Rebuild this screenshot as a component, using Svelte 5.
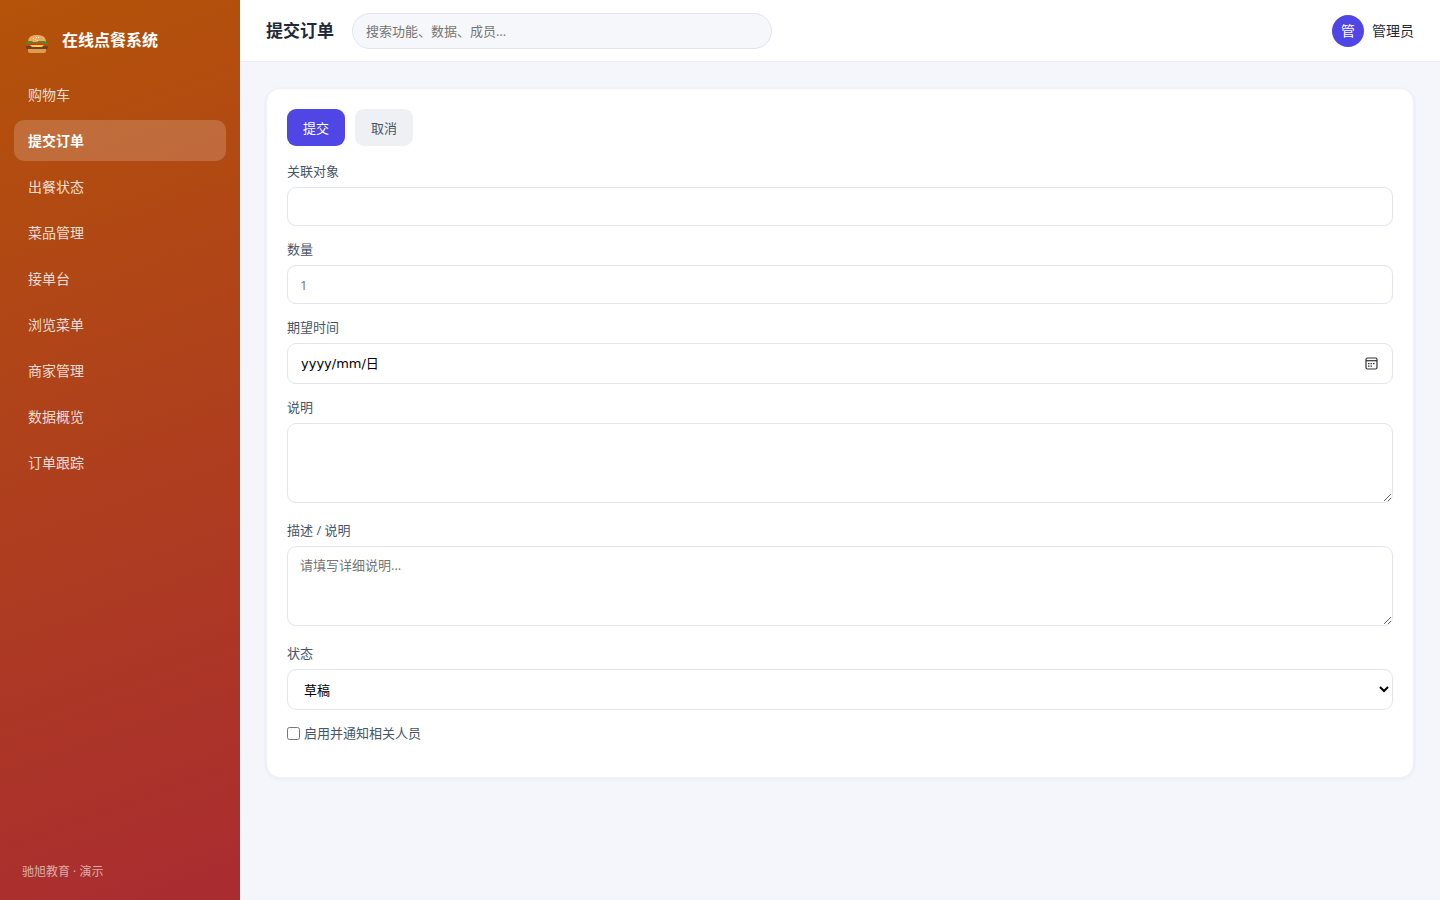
<script>
  const navItems = ['购物车', '提交订单', '出餐状态', '菜品管理', '接单台', '浏览菜单', '商家管理', '数据概览', '订单跟踪'];
  let active = $state('提交订单');
  let date = $state('');
</script>

<div class="layout">
  <aside class="sidebar">
    <div class="brand">
      <svg class="logo" viewBox="0 0 22 18" aria-hidden="true">
        <path d="M2 7C2 2.500 5 0 11 0s9 2.500 9 7z" fill="#f0a95e" />
        <path d="M7 3h1v1H7zM10 2h1v1h-1zM9 4h1v1H9zM12 2h1v1h-1zM11 5h1v1h-1z" fill="#fff3dc" />
        <path d="M2 14h18v2q0 2-2 2H4q-2 0-2-2z" fill="#e39a4c" />
        <path d="M3 8h16v2H3z" fill="#f02a25" />
        <rect x="0" y="11" width="22" height="3" rx="1" fill="#6d4030" />
        <path d="M4 10h14l-2 2H6z" fill="#ffd43b" />
        <path d="M2 6h4l1 1h4l1-1h7l1 1h1l1 1v1h-4l-1-1H5L4 9H0V8z" fill="#42961f" />
      </svg>
      <span>在线点餐系统</span>
    </div>
    <nav>
      {#each navItems as item}
        <a href="#top" class:active={item === active} onclick={(e) => { e.preventDefault(); active = item; }}>{item}</a>
      {/each}
    </nav>
    <footer>驰旭教育 · 演示</footer>
  </aside>

  <div class="main">
    <header>
      <h1>提交订单</h1>
      <input class="search" type="search" aria-label="搜索" placeholder="搜索功能、数据、成员…" />
      <div class="user">
        <span class="avatar">管</span>
        <span>管理员</span>
      </div>
    </header>

    <main>
      <form class="card" onsubmit={(e) => e.preventDefault()}>
        <div class="actions">
          <button type="submit" class="primary">提交</button>
          <button type="button">取消</button>
        </div>
        <div class="field">
          <label for="target">关联对象</label>
          <input id="target" type="text" />
        </div>
        <div class="field">
          <label for="amount">数量</label>
          <input id="amount" type="number" placeholder="1" />
        </div>
        <div class="field">
          <label for="date">期望时间</label>
          <div class="date">
            <input id="date" class="tall" class:empty={!date} type="date" bind:value={date} />
            {#if !date}<span class="hint" aria-hidden="true">yyyy/mm/日</span>{/if}
            <svg class="calendar" viewBox="0 0 13 13" aria-hidden="true">
              <rect x="1" y="1" width="11" height="11" rx="1.500" fill="none" stroke="#333" stroke-width="1.200" />
              <path d="M1 3.700h11" stroke="#333" stroke-width="1.200" />
              <path d="M5.500 6h1.500v1.200H5.500zM8 6h1.500v1.200H8zM3 6h1.500v1.200H3zM3 8.500h1.500v1.200H3zM5.500 8.500H7v1.200H5.500z" fill="#333" />
            </svg>
          </div>
        </div>
        <div class="field area">
          <label for="note">说明</label>
          <textarea id="note"></textarea>
        </div>
        <div class="field area">
          <label for="detail">描述 / 说明</label>
          <textarea id="detail" placeholder="请填写详细说明..."></textarea>
        </div>
        <div class="field">
          <label for="status">状态</label>
          <select id="status" class="tall">
            <option>草稿</option>
          </select>
        </div>
        <label class="check"><input type="checkbox" /><span>启用并通知相关人员</span></label>
      </form>
    </main>
  </div>
</div>

<style>
  :global(body) {
    margin: 0;
  }
  * {
    box-sizing: border-box;
  }
  .layout {
    display: flex;
    min-height: 100vh;
    background: #f5f6fb;
    color: #1e293b;
    font: 14px/20px "Open Sans", "Noto Sans CJK SC", sans-serif;
  }
  .sidebar {
    display: flex;
    flex-direction: column;
    flex: 0 0 240px;
    padding: 20px 14px;
    background: linear-gradient(160deg, #b45309, #a92c31);
    color: #fff;
  }
  .brand {
    display: flex;
    align-items: center;
    gap: 14px;
    height: 40px;
    margin-bottom: 14px;
    padding-left: 12px;
    font-size: 16px;
    font-weight: 700;
  }
  .logo {
    width: 22px;
    height: 18px;
    margin-top: 8px;
  }
  nav {
    display: flex;
    flex-direction: column;
    gap: 5px;
  }
  nav a {
    height: 41px;
    padding: 0 14px;
    border-radius: 10px;
    color: rgba(255, 255, 255, 0.82);
    line-height: 41px;
    text-decoration: none;
  }
  nav a.active {
    background: rgba(255, 255, 255, 0.18);
    color: #fff;
    font-weight: 700;
  }
  footer {
    margin-top: auto;
    padding-left: 8px;
    color: rgba(255, 255, 255, 0.6);
    font-size: 12px;
    line-height: 16px;
  }
  .main {
    flex: 1;
    min-width: 0;
  }
  header {
    display: flex;
    align-items: center;
    gap: 18px;
    height: 62px;
    padding: 0 26px;
    border-bottom: 1px solid #eceef4;
    background: #fff;
  }
  h1 {
    margin: 0;
    font-size: 17px;
    line-height: 24px;
    font-weight: 700;
  }
  .search {
    flex: 0 1 420px;
    min-width: 0;
    height: 36px;
    padding: 0 13px;
    border: 1px solid #e2e5ef;
    border-radius: 18px;
    background: #f5f7fb;
    font: 13px/18px "Open Sans", "Noto Sans CJK SC", sans-serif;
  }
  .user {
    display: flex;
    align-items: center;
    gap: 8px;
    margin-left: auto;
    white-space: nowrap;
  }
  .avatar {
    width: 32px;
    height: 32px;
    border-radius: 50%;
    background: #4f46e5;
    color: #fff;
    line-height: 32px;
    text-align: center;
  }
  main {
    padding: 26px;
  }
  .card {
    padding: 20px;
    border: 1px solid #f0f1f6;
    border-radius: 14px;
    background: #fff;
    box-shadow: 0 1px 4px rgba(30, 41, 90, 0.05);
    font-size: 13px;
  }
  .actions {
    display: flex;
    gap: 10px;
    margin-bottom: 16px;
  }
  button {
    height: 37px;
    padding: 0 16px;
    border: 0;
    border-radius: 9px;
    background: #eef0f4;
    color: #475569;
    font: 13px/20px "Open Sans", "Noto Sans CJK SC", sans-serif;
  }
  .primary {
    background: #4f46e5;
    color: #fff;
  }
  .field {
    display: flex;
    flex-direction: column;
    gap: 6px;
    margin-bottom: 14px;
  }
  .area {
    margin-bottom: 18px;
  }
  label {
    color: #475569;
    line-height: 19px;
  }
  .field input,
  .field select,
  .field textarea {
    width: 100%;
    height: 39px;
    margin: 0;
    padding: 9px 12px;
    border: 1px solid #e2e5ef;
    border-radius: 9px;
    background: #fff;
    color: #000;
    font: 13px/19px "Open Sans", "Noto Sans CJK SC", sans-serif;
  }
  .field .tall {
    height: 41px;
  }
  .field textarea {
    display: block;
    height: 80px;
    resize: vertical;
  }
  .date {
    position: relative;
  }
  .date input {
    display: block;
  }
  .field .date .empty {
    color: transparent;
  }
  .date input::-webkit-calendar-picker-indicator {
    opacity: 0;
  }
  .hint {
    position: absolute;
    top: 11px;
    left: 14px;
    color: #000;
    font-family: "DejaVu Sans", "Noto Sans CJK SC", sans-serif;
    line-height: 19px;
    pointer-events: none;
  }
  .calendar {
    position: absolute;
    top: 14px;
    right: 15px;
    width: 13px;
    height: 13px;
    pointer-events: none;
  }
  .check {
    display: flex;
    align-items: center;
    gap: 4px;
    margin-bottom: 14px;
  }
  .check input {
    width: 13px;
    height: 13px;
    margin: 0;
  }
</style>
